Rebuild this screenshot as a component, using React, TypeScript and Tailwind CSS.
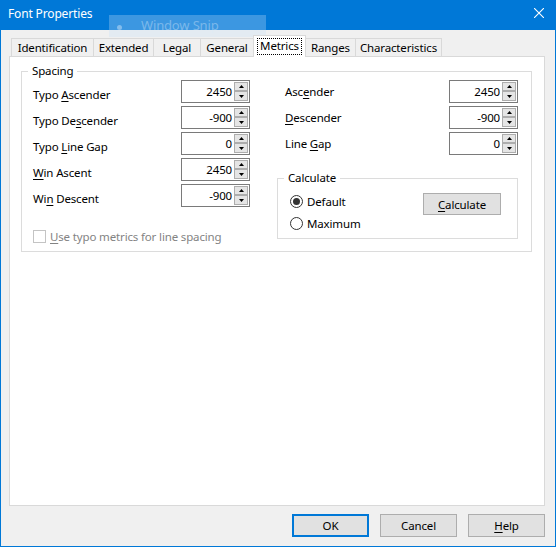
import React from "react";

const tabs = [
  { label: "Identification", w: "w-[83px]" },
  { label: "Extended", w: "w-[61px]" },
  { label: "Legal", w: "w-[48px]" },
  { label: "General", w: "w-[54px]" },
  { label: "Metrics", w: "w-[53px]", active: true },
  { label: "Ranges", w: "w-[51px]" },
  { label: "Characteristics", w: "w-[87px]" },
];

// letter with keyboard accelerator underline
const U = ({ children }: { children: React.ReactNode }) => (
  <span className="underline decoration-1 underline-offset-[2px]">{children}</span>
);

const Arrow = ({ down }: { down?: boolean }) => (
  <svg width="5" height="3" viewBox="0 0 5 3">
    <polygon points={down ? "0,0 5,0 2.5,3" : "2.5,0 5,3 0,3"} fill="#000" />
  </svg>
);

const Spin = ({ value }: { value: string }) => (
  <div className="flex h-[23px] w-[69px] items-stretch border border-[#7a7a7a] bg-white">
    <span className="flex flex-1 items-center justify-end pr-[2px]">{value}</span>
    <div className="flex flex-col py-[1px] pr-[1px]">
      <div className="flex h-[9px] w-[14px] items-center justify-center border border-[#adadad] bg-[#e5e5e5]">
        <Arrow />
      </div>
      <div className="flex h-[10px] w-[14px] items-center justify-center border border-[#adadad] bg-[#e5e5e5]">
        <Arrow down />
      </div>
    </div>
  </div>
);

const Radio = ({ checked, label }: { checked?: boolean; label: string }) => (
  <div className="flex h-[17px] items-center gap-[4px]">
    <span className="flex h-[13px] w-[13px] items-center justify-center rounded-full border border-[#333333] bg-white">
      {checked && <span className="h-[7px] w-[7px] rounded-full bg-[#333333]" />}
    </span>
    <span>{label}</span>
  </div>
);

export default function App() {
  const left = [
    { label: <>Typo <U>A</U>scender</>, value: "2450" },
    { label: <>Typo De<U>s</U>cender</>, value: "-900" },
    { label: <>Typo <U>L</U>ine Gap</>, value: "0" },
    { label: <><U>W</U>in Ascent</>, value: "2450" },
    { label: <>Wi<U>n</U> Descent</>, value: "-900" },
  ];
  const right = [
    { label: <>Asc<U>e</U>nder</>, value: "2450" },
    { label: <><U>D</U>escender</>, value: "-900" },
    { label: <>Line <U>G</U>ap</>, value: "0" },
  ];

  return (
    <div className="relative flex h-[547px] w-[556px] flex-col overflow-hidden border-x border-b border-[#0078d7] bg-[#f0f0f0] font-['Noto_Sans',sans-serif] text-[11.5px] leading-[17px] tracking-[-0.15px] text-black">
      {/* title bar */}
      <div className="flex h-[30px] shrink-0 items-center justify-between bg-[#0078d7] pb-[4px] pl-[7px] pr-[11px] text-[12px] text-white">
        <span>Font Properties</span>
        <svg width="10" height="10" viewBox="0 0 10 10">
          <path d="M0 0L10 10M10 0L0 10" stroke="#fff" strokeWidth="1.1" />
        </svg>
      </div>

      {/* ghost of the snipping tool window */}
      <div className="absolute left-[108px] top-[15px] flex h-[22px] w-[157px] items-center gap-[19px] bg-[rgba(200,225,250,0.3)] pb-[2px] pl-[8px] text-[rgba(220,235,250,0.4)]">
        <span className="h-[5px] w-[5px] translate-y-[2px] rounded-full bg-[rgba(220,235,250,0.45)]" />
        <span className="text-[13px]">Window Snip</span>
      </div>

      <div className="flex flex-1 flex-col px-[8px] pt-[5px]">
        {/* tabs */}
        <div className="relative z-10 -mb-px flex h-[22px] items-end pl-[2px]">
          {tabs.map((t, i) =>
            t.active ? (
              <div
                key={t.label}
                className={`relative ${t.w} ${i ? "-ml-px" : ""} flex h-[22px] items-center justify-center border-x border-t border-[#d9d9d9] bg-white pb-[3px]`}
              >
                <span className="absolute inset-x-[3px] bottom-[2px] top-[2px] border border-dotted border-black" />
                {t.label}
              </div>
            ) : (
              <div
                key={t.label}
                className={`${t.w} ${i ? "-ml-px" : ""} flex h-[19px] items-center justify-center border border-[#d9d9d9] bg-[#f0f0f0]`}
              >
                {t.label}
              </div>
            )
          )}
        </div>

        {/* tab page */}
        <div className="h-[450px] w-[536px] border border-[#d9d9d9] bg-white">
          <fieldset className="ml-[11px] mt-[7px] w-[511px] border border-[#dcdcdc] pb-[6px] pl-[11px] pt-[2px]">
            <legend className="-ml-[5px] px-[4px] leading-[14px]">Spacing</legend>
            <div className="flex gap-[27px]">
              {/* left column */}
              <div className="flex w-[217px] flex-col gap-[3px]">
                {left.map((r, i) => (
                  <div key={i} className="flex items-center justify-between">
                    <span className="pt-[6px]">{r.label}</span>
                    <Spin value={r.value} />
                  </div>
                ))}
                <div className="mt-[18px] flex h-[17px] items-center gap-[4px] text-[#838383]">
                  <span className="h-[13px] w-[13px] border border-[#c4c4c4] bg-white" />
                  <span>
                    <U>U</U>se typo metrics for line spacing
                  </span>
                </div>
              </div>

              {/* right column */}
              <div className="flex w-[241px] flex-col gap-[3px]">
                {right.map((r, i) => (
                  <div key={i} className="flex items-center justify-between">
                    <span className="pl-[8px]">{r.label}</span>
                    <Spin value={r.value} />
                  </div>
                ))}
                <fieldset className="mt-[13px] border border-[#dcdcdc] pb-[6px] pl-[12px] pr-[16px] pt-[8px]">
                  <legend className="-ml-[6px] px-[4px] leading-[14px]">Calculate</legend>
                  <div className="flex items-start justify-between">
                    <div className="flex flex-col gap-[5px]">
                      <Radio checked label="Default" />
                      <Radio label="Maximum" />
                    </div>
                    <div className="flex h-[22px] w-[78px] items-center justify-center border border-[#adadad] bg-[#e1e1e1]">
                      <span>
                        <U>C</U>alculate
                      </span>
                    </div>
                  </div>
                </fieldset>
              </div>
            </div>
          </fieldset>
        </div>

        {/* dialog buttons */}
        <div className="mt-[8px] flex justify-end gap-[11px] pr-[2px]">
          <div className="flex h-[23px] w-[77px] items-center justify-center border-2 border-[#0078d7] bg-[#e1e1e1]">
            OK
          </div>
          <div className="flex h-[23px] w-[77px] items-center justify-center border border-[#adadad] bg-[#e1e1e1]">
            Cancel
          </div>
          <div className="flex h-[23px] w-[77px] items-center justify-center border border-[#adadad] bg-[#e1e1e1]">
            <span>
              <U>H</U>elp
            </span>
          </div>
        </div>
      </div>
    </div>
  );
}
